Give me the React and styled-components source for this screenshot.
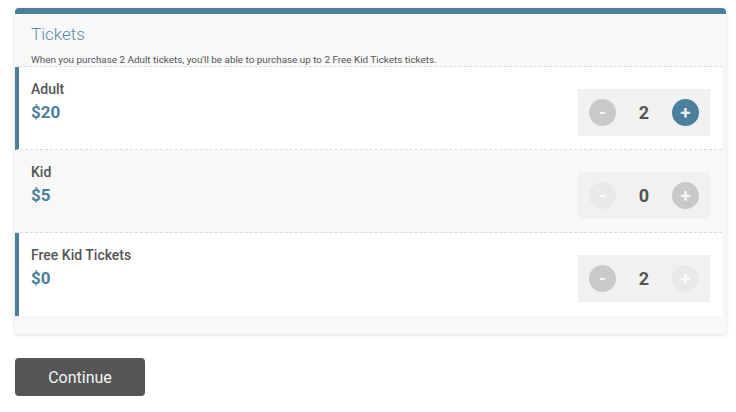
import styled, { createGlobalStyle } from "styled-components";

const GlobalStyle = createGlobalStyle`
  body {
    margin: 0;
    background: #fff;
    font-family: Roboto, "Liberation Sans", sans-serif;
  }
`;

const Page = styled.div`
  padding: 8px 10px 0 15px;
`;

const Card = styled.div`
  width: 711px;
  background: #f8f8f8;
  border-top: 6px solid #4b7f9b;
  border-radius: 4px 4px 2px 2px;
  box-shadow: 0 1px 4px rgba(0, 0, 0, 0.14);
  padding: 0 4px 18px 0;
  box-sizing: border-box;
`;

const Header = styled.div`
  padding: 9px 0 0 12px;
  margin-left: 4px;
  border-bottom: 1px dashed #dcdcdc;
  .Title {
    margin: 0;
    font-size: 17px;
    font-weight: 300;
    color: #5a8aa6;
    line-height: 22px;
  }
  .Note {
    margin: 8px 0 0;
    font-size: 9.9px;
    color: #555;
    line-height: 13px;
  }
`;

const Row = styled.div`
  display: flex;
  justify-content: space-between;
  align-items: flex-start;
  height: 83px;
  box-sizing: border-box;
  padding: 13px 12px 0 ${(p) => (p.$active ? "12px" : "16px")};
  background: ${(p) => (p.$active ? "#fff" : "#f8f8f8")};
  border-left: ${(p) => (p.$active ? "4px solid #4b7f9b" : "none")};
  border-bottom: ${(p) => (p.$last ? "none" : "1px dashed #dcdcdc")};
  .Name {
    font-size: 14px;
    font-weight: 500;
    color: #555;
    line-height: 18px;
  }
  .Price {
    margin-top: 3px;
    font-size: 17px;
    font-weight: 700;
    color: #4b7f9b;
    line-height: 22px;
  }
`;

const Stepper = styled.div`
  margin-top: 9px;
  width: 132px;
  height: 47px;
  display: flex;
  align-items: center;
  justify-content: space-between;
  padding: 0 11px;
  box-sizing: border-box;
  background: #f1f1f1;
  .Count {
    font-size: 18px;
    font-weight: 700;
    color: #555;
  }
`;

const tones = {
  on: "#4b7f9b",
  off: "#c9c9c9",
  dim: "#e9e9e9",
};

const Circle = styled.button`
  width: 27px;
  height: 27px;
  border-radius: 50%;
  border: none;
  padding: 0;
  display: flex;
  align-items: center;
  justify-content: center;
  background: ${(p) => tones[p.$tone]};
  color: rgba(255, 255, 255, 0.85);
  font-family: Roboto, "Liberation Sans", sans-serif;
  font-size: 19px;
  font-weight: 700;
  line-height: 1;
  cursor: pointer;
`;

const ContinueButton = styled.button`
  margin-top: 24px;
  width: 130px;
  height: 38px;
  border: none;
  border-radius: 4px;
  background: #555;
  color: #f4f4f4;
  font-family: Roboto, "Liberation Sans", sans-serif;
  font-size: 16px;
  cursor: pointer;
`;

const tickets = [
  { name: "Adult", price: "$20", count: 2, minus: "off", plus: "on", active: true },
  { name: "Kid", price: "$5", count: 0, minus: "dim", plus: "off", active: false },
  { name: "Free Kid Tickets", price: "$0", count: 2, minus: "off", plus: "dim", active: true },
];

export default function App() {
  return (
    <Page>
      <GlobalStyle />
      <Card>
        <Header>
          <h2 className="Title">Tickets</h2>
          <p className="Note">
            When you purchase 2 Adult tickets, you'll be able to purchase up to 2 Free Kid Tickets tickets.
          </p>
        </Header>
        {tickets.map((t, i) => (
          <Row key={t.name} $active={t.active} $last={i === tickets.length - 1}>
            <div>
              <div className="Name">{t.name}</div>
              <div className="Price">{t.price}</div>
            </div>
            <Stepper>
              <Circle $tone={t.minus}>-</Circle>
              <span className="Count">{t.count}</span>
              <Circle $tone={t.plus}>+</Circle>
            </Stepper>
          </Row>
        ))}
      </Card>
      <ContinueButton>Continue</ContinueButton>
    </Page>
  );
}
